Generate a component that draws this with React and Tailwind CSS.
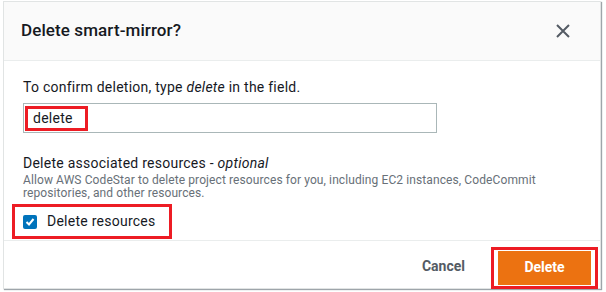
export default function App() {
    return (
        <div className="w-[606px] h-[292px] bg-white pl-[3px] pt-[1px]" style={{ fontFamily: 'Roboto, "Noto Sans", sans-serif' }}>
            <div className="w-[598px] h-[288px] bg-white border border-[#e1e4e4] shadow-[1px_1px_1px_#9ea5aa] flex flex-col">
                <div className="h-[59px] bg-[#fafafa] border-b border-[#eaeded] flex items-center justify-between pl-[17px] pr-[29px]">
                    <h2 className="text-[17px] font-medium text-[#16191f] tracking-[0.1px]">Delete smart-mirror?</h2>
                    <svg width="16" height="16" viewBox="0 0 16 16" className="text-[#545b64]">
                        <path d="M2 2 L14 14 M14 2 L2 14" stroke="currentColor" strokeWidth="2" fill="none" />
                    </svg>
                </div>
                <div className="flex-1 pl-[19px] pt-[16px]">
                    <p className="text-[14px] text-[#16191f] leading-[20px] tracking-[0.25px]">
                        To confirm deletion, type <i>delete</i> in the field.
                    </p>
                    <div className="mt-[6px] w-[414px] h-[30px] border border-[#aab7b8] flex items-center pl-[1px]">
                        <div className="h-[25px] w-[63px] border-[3px] border-[#ed1c24] flex items-center pl-[5px] text-[14px] text-[#16191f] tracking-[0.25px]">
                            delete
                        </div>
                    </div>
                    <p className="mt-[20px] text-[14px] text-[#16191f] leading-[20px] tracking-[0.25px]">
                        Delete associated resources - <i>optional</i>
                    </p>
                    <p className="text-[12px] text-[#687078] leading-[13px] w-[530px] mt-[1px] tracking-[0.1px]">
                        Allow AWS CodeStar to delete project resources for you, including EC2 instances, CodeCommit repositories, and other resources.
                    </p>
                    <div className="-ml-[11px] mt-[4px] w-[160px] h-[35px] border-[3px] border-[#ed1c24] flex items-center pl-[8px] gap-[10px]">
                        <span className="w-[14px] h-[14px] rounded-[2px] bg-[#0073bb] flex items-center justify-center">
                            <svg width="10" height="10" viewBox="0 0 10 10">
                                <path d="M1.5 5 L4 7.5 L8.5 2" stroke="white" strokeWidth="2" fill="none" />
                            </svg>
                        </span>
                        <span className="text-[14px] text-[#16191f] tracking-[0.25px]">Delete resources</span>
                    </div>
                </div>
                <div className="h-[48px] border-t border-[#eaeded] flex items-center justify-end pr-[2px]">
                    <button className="text-[14px] font-bold text-[#545b64] mr-[26px] mt-[4px]">Cancel</button>
                    <div className="w-[107px] h-[42px] border-[3px] border-[#ed1c24] flex items-center justify-center mt-[6px] bg-white">
                        <button className="w-[95px] h-[34px] bg-[#ec7211] border-x border-white text-white text-[14px] font-bold">Delete</button>
                    </div>
                </div>
            </div>
        </div>
    )
}
